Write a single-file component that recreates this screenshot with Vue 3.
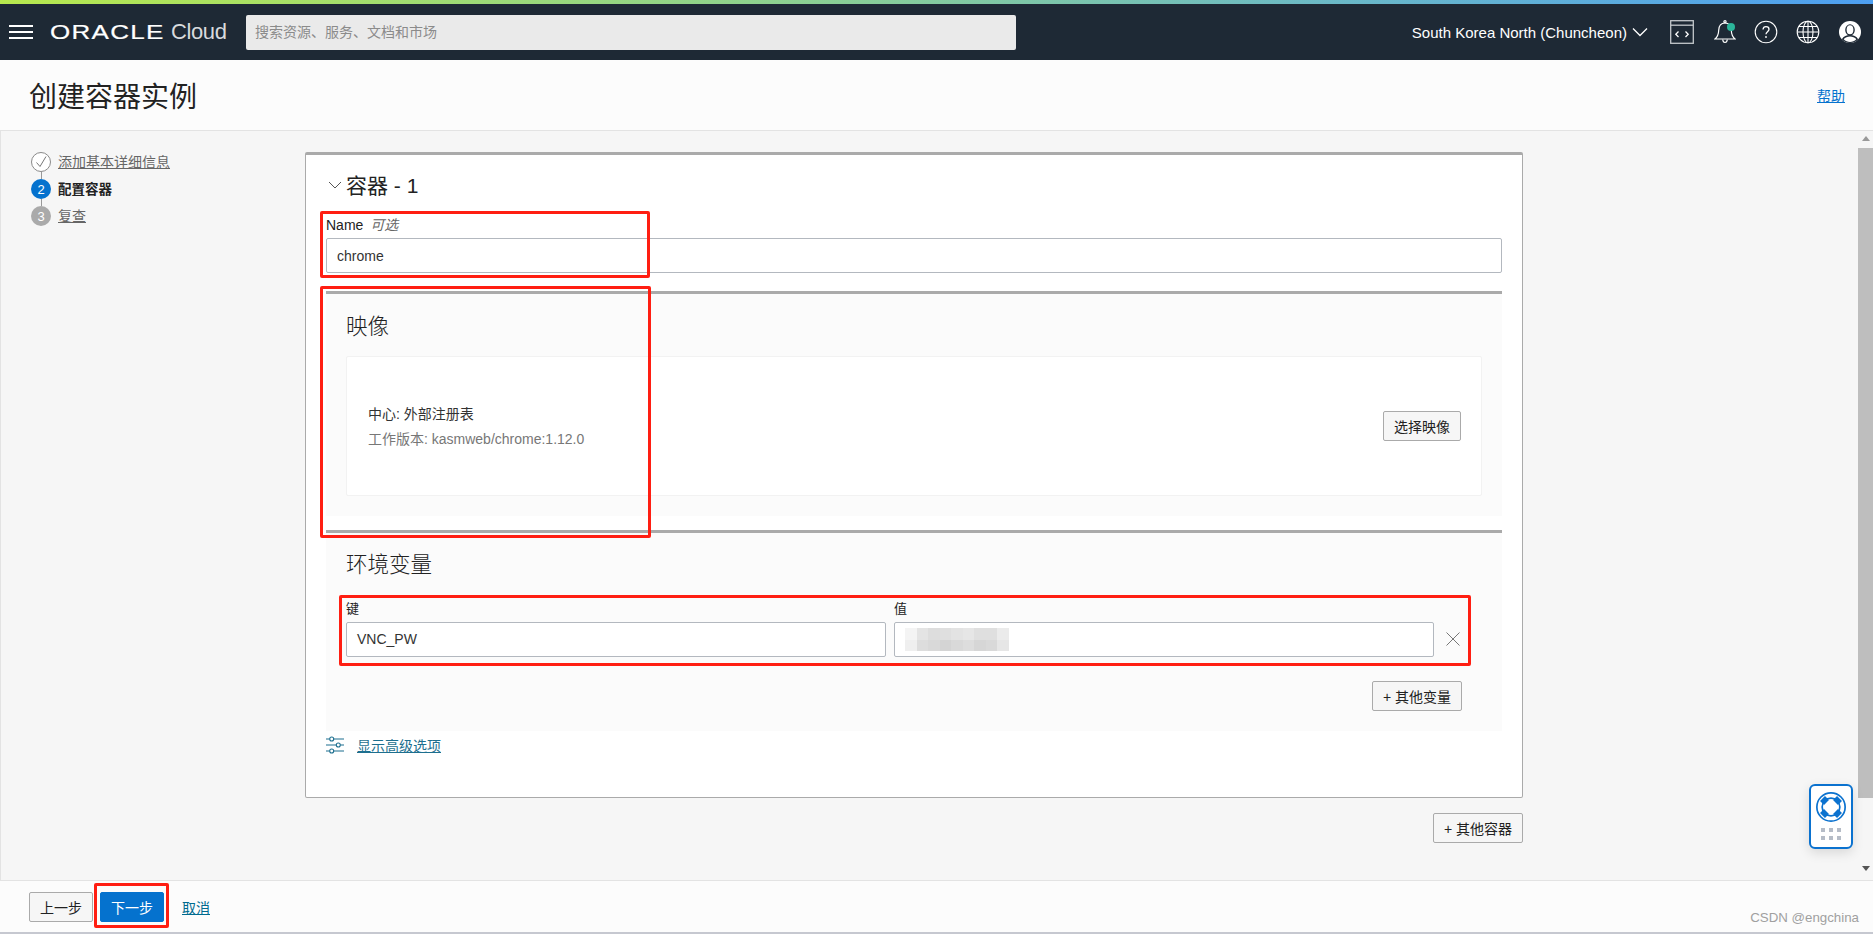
<script setup>
const steps = [
  { n: '✓', label: '添加基本详细信息', cls: 'done' },
  { n: '2', label: '配置容器', cls: 'active' },
  { n: '3', label: '复查', cls: 'todo' }
]
const blur = [
  .25, .6, .75, .7, .62, .55, .7, .7, .45,
  .35, .75, .85, .95, .85, .75, .9, .85, .55
]
</script>

<template>
  <div class="page">
    <div class="stripe"></div>

    <header class="top">
      <div class="burger"><i></i><i></i><i></i></div>
      <div class="logo"><span class="oracle">ORACLE</span><span class="cloud">Cloud</span></div>
      <div class="search">搜索资源、服务、文档和市场</div>
      <div class="top-right">
        <span class="region">South Korea North (Chuncheon)</span>
        <svg class="chev" width="16" height="10" viewBox="0 0 16 10"><path d="M1 1.500 8 8.500 15 1.500" fill="none" stroke="#fff" stroke-width="1.300"/></svg>
        <svg class="ico code" width="24" height="24" viewBox="0 0 24 24" fill="none" stroke="#c4c8cc" stroke-width="1.300"><rect x=".7" y=".7" width="22.600" height="22.600"/><path d="M.7 5.200h22.600" /><path d="M8.500 11.500 5.800 14.200 8.500 17M15.500 11.500 18.200 14.200 15.500 17" stroke="#fff"/></svg>
        <svg class="ico bell" width="22" height="24" viewBox="0 0 22 24" fill="none" stroke="#fff" stroke-width="1.200"><path d="M1 19c2.600-2.300 3.600-5.400 3.700-8.800C4.900 5.600 7.600 3 11 3s6.100 2.600 6.300 7.200c.1 3.400 1.100 6.500 3.700 8.800z"/><path d="M8.700 19.500c.2 2 1.100 3 2.300 3s2.100-1 2.300-3"/><circle cx="11" cy="1.700" r="1.100"/><circle cx="17" cy="7" r="4" fill="#2bb59a" stroke="none"/></svg>
        <svg class="ico" width="24" height="24" viewBox="0 0 24 24" fill="none" stroke="#fff" stroke-width="1.100"><circle cx="12" cy="12" r="10.800"/><path d="M9 9.500c.2-1.800 1.500-2.800 3-2.800 1.800 0 3 1.100 3 2.600 0 2.300-3 2.400-3 4.900" stroke-width="1.300"/><circle cx="12" cy="17" r=".9" fill="#fff" stroke="none"/></svg>
        <svg class="ico" width="24" height="24" viewBox="0 0 24 24" fill="none" stroke="#fff" stroke-width="1.100"><circle cx="12" cy="12" r="10.800"/><ellipse cx="12" cy="12" rx="5" ry="10.800"/><path d="M12 1.200v21.600M1.200 12h21.600M2.800 6.500h18.400M2.800 17.500h18.400"/></svg>
        <svg class="ico" width="24" height="24" viewBox="0 0 24 24"><circle cx="12" cy="12" r="11" fill="#fff"/><ellipse cx="12" cy="10" rx="4.800" ry="5.800" fill="#1e2935"/><path d="M3.800 19.200c1.800-3.200 4.800-4.200 8.200-4.200s6.400 1 8.200 4.200C18 21.700 15.200 23 12 23s-6-1.300-8.200-3.800z" fill="#1e2935"/><ellipse cx="12" cy="9.800" rx="3.400" ry="4.500" fill="#fff"/><path d="M5.700 19.300c1.500-1.900 3.700-2.800 6.300-2.800s4.800.9 6.300 2.800C16.600 21 14.400 22 12 22s-4.600-1-6.300-2.700z" fill="#fff"/></svg>
      </div>
    </header>

    <div class="title-bar">
      <h1>创建容器实例</h1>
      <a class="help">帮助</a>
    </div>

    <div class="main">
      <nav class="steps">
        <div v-for="s in steps" :key="s.label" class="step" :class="s.cls">
          <span class="dot">
            <svg v-if="s.cls === 'done'" width="14" height="14" viewBox="0 0 14 14"><path d="M2.500 7.500 6 11.500 12 1.500" fill="none" stroke="#777" stroke-width="1"/></svg>
            <template v-else>{{ s.n }}</template>
          </span>
          <span class="step-label">{{ s.label }}</span>
        </div>
      </nav>

      <div class="content">
        <section class="card">
          <div class="card-title">
            <svg width="14" height="8" viewBox="0 0 14 8"><path d="M1 1 7 7 13 1" fill="none" stroke="#555" stroke-width="1"/></svg>
            <span>容器 - 1</span>
          </div>
          <label class="lbl">Name <em>可选</em></label>
          <div class="input name-input">chrome</div>

          <div class="section image">
            <h2>映像</h2>
            <div class="inner">
              <div class="meta">
                <div class="hub">中心: 外部注册表</div>
                <div class="ver">工作版本: kasmweb/chrome:1.12.0</div>
              </div>
              <button class="btn">选择映像</button>
            </div>
          </div>

          <div class="section env">
            <h2>环境变量</h2>
            <div class="pair">
              <div class="field">
                <label class="lbl small">键</label>
                <div class="input">VNC_PW</div>
              </div>
              <div class="field">
                <label class="lbl small">值</label>
                <div class="input blur-wrap">
                  <div class="blur">
                    <i v-for="(o, idx) in blur" :key="idx" :style="{ opacity: o }"></i>
                  </div>
                </div>
              </div>
              <svg class="close" width="16" height="16" viewBox="0 0 16 16"><path d="M1.500 1.500 14.500 14.500M14.500 1.500 1.500 14.500" stroke="#777" stroke-width="1" fill="none"/></svg>
            </div>
            <div class="right"><button class="btn">+ 其他变量</button></div>
          </div>

          <a class="advanced">
            <svg width="18" height="18" viewBox="0 0 18 18" fill="none" stroke="#1d6f8f" stroke-width="1.100"><path d="M0 3h3.500M8 3h10M0 9h10M14.500 9H18M0 15h3.500M8 15h10"/><circle cx="5.700" cy="3" r="2"/><circle cx="12.300" cy="9" r="2"/><circle cx="5.700" cy="15" r="2"/></svg>
            <span>显示高级选项</span>
          </a>
        </section>
        <div class="card-foot"><button class="btn">+ 其他容器</button></div>
      </div>

      <div class="widget">
        <svg width="32" height="32" viewBox="0 0 32 32">
          <circle cx="16" cy="16" r="11.500" fill="none" stroke="#0b72cf" stroke-width="7"/>
          <circle cx="16" cy="16" r="11.500" fill="none" stroke="#fff" stroke-width="3.600"/>
          <path d="M7.500 7.500 11.500 11.500M24.500 7.500 20.500 11.500M7.500 24.500 11.500 20.500M24.500 24.500 20.500 20.500" stroke="#0b72cf" stroke-width="7"/>
        </svg>
        <div class="grid"><i v-for="n in 6" :key="n"></i></div>
      </div>

      <aside class="scroll">
        <span class="arrow up"></span>
        <div class="thumb"></div>
        <span class="arrow down"></span>
      </aside>
    </div>

    <footer class="foot">
      <button class="btn">上一步</button>
      <button class="btn primary">下一步</button>
      <a class="cancel">取消</a>
      <span class="mark">CSDN @engchina</span>
    </footer>

    <div class="red r-name"></div>
    <div class="red r-image"></div>
    <div class="red r-env"></div>
    <div class="red r-next"></div>
  </div>
</template>

<style>
html, body { margin: 0; overflow: hidden; background: #fff; }
</style>

<style scoped>
.page {
  position: relative;
  width: 1873px;
  height: 934px;
  display: flex;
  flex-direction: column;
  overflow: hidden;
  font-family: "Liberation Sans", "Noto Sans CJK SC", sans-serif;
  font-size: 14px;
  color: #222;
  background: #f6f6f6;
}
.stripe {
  height: 4px;
  flex: none;
  background: linear-gradient(90deg, #b7e84e 0%, #8fd28d 40%, #6ab8c8 72%, #4d9ff2 100%);
}
.top {
  height: 56px;
  flex: none;
  display: flex;
  align-items: center;
  background: #1e2935;
  color: #fff;
}
.burger { width: 24px; margin-left: 9px; display: flex; flex-direction: column; gap: 4px; }
.burger i { display: block; height: 2px; background: #fff; }
.logo { width: 179px; margin-left: 17px; display: flex; align-items: center; flex: none; }
.oracle {
  display: inline-block;
  width: 114px;
  font-size: 20px;
  letter-spacing: 1px;
  transform: scaleX(1.3);
  transform-origin: left center;
  -webkit-text-stroke: .2px #fff;
}
.cloud { margin-left: 7px; font-size: 22px; font-weight: 400; color: #d8dadd; letter-spacing: -.4px; }
.search {
  width: 761px;
  height: 35px;
  margin-left: 17px;
  padding-left: 9px;
  box-sizing: content-box;
  line-height: 35px;
  font-size: 14px;
  color: #8b8b8b;
  background: #eaeaea;
  border-radius: 2px;
  flex: none;
}
.top-right { margin-left: auto; display: flex; align-items: center; padding-right: 11px; }
.region { font-size: 15px; color: #fff; }
.chev { margin-left: 5px; }
.ico { display: block; margin-left: 18px; }
.ico.code { margin-left: 22px; }
.ico.bell { margin-left: 20px; }
.title-bar {
  height: 71px;
  flex: none;
  box-sizing: border-box;
  padding: 0 28px 0 29px;
  display: flex;
  align-items: center;
  justify-content: space-between;
  background: #fcfcfc;
  border-bottom: 1px solid #e3e3e3;
}
h1 { margin: 0; font-size: 28px; font-weight: 400; color: #222; }
.help { color: #0572ce; text-decoration: underline; font-size: 14px; }
.main { position: relative; flex: 1; min-height: 0; display: flex; border-left: 1px solid #e3e3e3; }
.steps { width: 304px; flex: none; padding: 21px 0 0 30px; box-sizing: border-box; display: flex; flex-direction: column; gap: 7px; }
.step { position: relative; display: flex; align-items: center; height: 20px; }
.step + .step::before {
  content: "";
  position: absolute;
  left: 9.500px;
  top: -7px;
  width: 1px;
  height: 7px;
  background: #999;
}
.dot {
  width: 20px;
  height: 20px;
  box-sizing: border-box;
  border-radius: 50%;
  display: flex;
  align-items: center;
  justify-content: center;
  font-size: 13px;
  color: #fff;
}
.done .dot { border: 1px solid #8a8a8a; background: #fff; }
.active .dot { background: #0572ce; }
.todo .dot { background: #aaa; }
.step-label { margin: 0 0 2px 7px; font-size: 14px; color: #666; text-decoration: underline; }
.active .step-label { color: #222; font-weight: 700; text-decoration: none; font-size: 13.500px; }
.content { width: 1218px; flex: none; padding-top: 21px; }
.card {
  box-sizing: border-box;
  padding: 0 20px 42px 20px;
  background: #fff;
  border: 1px solid #aaa;
  border-top: 3px solid #aaa;
  border-radius: 2px;
}
.card-title { box-sizing: border-box; height: 62px; padding-bottom: 5px; display: flex; align-items: center; font-size: 21px; color: #222; }
.card-title svg { margin: 2px 4px 0 2px; }
.lbl { display: block; height: 16px; line-height: 16px; margin-bottom: 5px; font-size: 14px; color: #222; }
.lbl em { margin-left: 3px; color: #666; font-size: 14px; }
.lbl.small { font-size: 13px; }
.input {
  box-sizing: border-box;
  height: 35px;
  line-height: 33px;
  padding-left: 10px;
  background: #fff;
  border: 1px solid #b3b8bf;
  border-radius: 2px;
  font-size: 14px;
  color: #333;
}
.name-input { line-height: 34px; }
.section {
  margin-top: 18px;
  padding: 19px 20px 20px 20px;
  background: #fbfbfb;
  border-top: 3px solid #aaa;
}
.section h2 { margin: 0; font-size: 21.500px; line-height: 28px; font-weight: 300; color: #222; }
.inner {
  box-sizing: border-box;
  height: 140px;
  margin-top: 15px;
  padding: 0 20px 0 21px;
  display: flex;
  align-items: center;
  justify-content: space-between;
  background: #fff;
  border: 1px solid #f2f2f2;
  border-radius: 2px;
}
.hub { font-size: 14px; line-height: 16px; color: #333; }
.ver { margin-top: 9px; font-size: 14px; line-height: 16px; color: #777; }
.env { margin-top: 14px; padding: 18px 20px 20px 20px; }
.pair { margin-top: 22px; display: flex; align-items: flex-end; }
.field { width: 540px; margin-right: 8px; }
.field + .field { margin-right: 11px; }
.close { display: block; margin-bottom: 10px; }
.blur-wrap { padding: 5px 0 0 10px; }
.blur { display: grid; grid-template-columns: repeat(9, 11.500px); grid-auto-rows: 11.500px; }
.blur i { background: #d2d2d2; }
.right { margin-top: 24px; padding-right: 20px; display: flex; justify-content: flex-end; }
.btn {
  box-sizing: border-box;
  height: 30px;
  padding: 0 10px;
  font: inherit;
  font-size: 14px;
  color: #222;
  background: #f6f6f6;
  border: 1px solid #aaa;
  border-radius: 2px;
}
.advanced { margin-top: 4px; height: 20px; display: flex; align-items: center; color: #1d6f8f; }
.advanced span { margin-left: 13px; text-decoration: underline; font-size: 14px; }
.card-foot { margin-top: 15px; display: flex; justify-content: flex-end; }
.widget {
  position: absolute;
  left: 1808px;
  top: 653px;
  box-sizing: border-box;
  width: 44px;
  height: 65px;
  padding-top: 5px;
  display: flex;
  flex-direction: column;
  align-items: center;
  background: #fff;
  border: 2px solid #0b72cf;
  border-radius: 6px;
  box-shadow: 0 4px 12px rgba(0,0,0,.12);
}
.grid { margin-top: 5px; display: grid; grid-template-columns: repeat(3, 4px); grid-auto-rows: 4px; gap: 4px; }
.grid i { background: #b5bcc7; }
.scroll {
  width: 15px;
  margin-left: auto;
  flex: none;
  display: flex;
  flex-direction: column;
  align-items: center;
  background: #f6f6f6;
}
.thumb { width: 15px; height: 650px; margin-top: 7px; background: #bebebe; }
.arrow { width: 0; height: 0; border-left: 4px solid transparent; border-right: 4px solid transparent; }
.arrow.up { margin-top: 5px; border-bottom: 5px solid #999; }
.arrow.down { margin-top: 68px; border-top: 5px solid #555; }
.foot {
  position: relative;
  height: 54px;
  flex: none;
  box-sizing: border-box;
  padding: 0 0 0 29px;
  display: flex;
  align-items: center;
  gap: 7px;
  background: #fcfcfc;
  border-top: 1px solid #e3e3e3;
  border-bottom: 2px solid #c6c8d0;
}
.foot .btn { width: 64px; padding: 0; }
.btn.primary { background: #0572ce; border-color: #0572ce; color: #fff; }
.cancel { margin-left: 11px; color: #006b8f; text-decoration: underline; font-size: 14px; }
.mark { position: absolute; right: 14px; top: 29px; font-size: 13.300px; color: #a0a0a0; }
.red { position: absolute; box-sizing: border-box; border: 3px solid #ff1e12; border-radius: 2px; pointer-events: none; }
.r-name { left: 320px; top: 211px; width: 330px; height: 67px; }
.r-image { left: 320px; top: 286px; width: 331px; height: 252px; }
.r-env { left: 339px; top: 595px; width: 1132px; height: 71px; }
.r-next { left: 94px; top: 883px; width: 75px; height: 45px; }
</style>
